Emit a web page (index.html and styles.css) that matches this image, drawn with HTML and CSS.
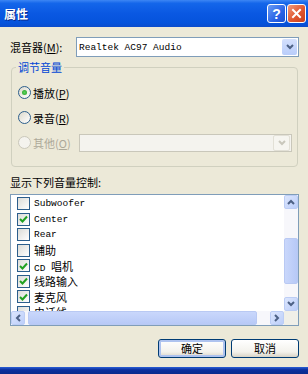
FILE: index.html
```html
<!DOCTYPE html>
<html lang="zh-CN">
<head>
  <meta charset="UTF-8" />
  <meta name="viewport" content="width=device-width, initial-scale=1.0"/>
  <title>属性</title>
  <link rel="stylesheet" href="styles.css">
</head>
<body>
  <div class="window">
    <div class="titlebar">
      <span class="title">属性</span>
      <div class="title-buttons">
        <button class="tb-btn help">?</button>
        <button class="tb-btn close">
          <svg width="11" height="11" viewBox="0 0 11 11"><path d="M2 2 L9 9 M9 2 L2 9" stroke="#fff" stroke-width="2" stroke-linecap="square" fill="none"/></svg>
        </button>
      </div>
    </div>

    <div class="content">
      <div class="mixer-row">
        <label class="mixer-label">混音器(<u>M</u>):</label>
        <div class="combo">
          <span class="mono">Realtek AC97 Audio</span>
          <span class="drop">
            <svg width="8" height="6" viewBox="0 0 8 6"><path d="M1 1 L4 4 L7 1" stroke="#4d6185" stroke-width="2" fill="none"/></svg>
          </span>
        </div>
      </div>

      <fieldset class="group">
        <legend>调节音量</legend>
        <div class="radio-row">
          <span class="radio checked"></span>
          <span>播放(<u>P</u>)</span>
        </div>
        <div class="radio-row">
          <span class="radio"></span>
          <span>录音(<u>R</u>)</span>
        </div>
        <div class="radio-row disabled">
          <span class="radio"></span>
          <span class="other-label">其他(<u>O</u>)</span>
          <div class="combo combo-disabled">
            <span class="drop">
              <svg width="8" height="6" viewBox="0 0 8 6"><path d="M1 1 L4 4 L7 1" stroke="#c9c7bc" stroke-width="2" fill="none"/></svg>
            </span>
          </div>
        </div>
      </fieldset>

      <div class="list-label">显示下列音量控制:</div>
      <div class="listbox">
        <div class="items">
          <div class="item"><span class="check"></span><span class="mono">Subwoofer</span></div>
          <div class="item"><span class="check on"><svg width="9" height="8" viewBox="0 0 9 8"><path d="M1 4 L3.5 6.5 L8 1.5" stroke="#21a121" stroke-width="2" fill="none"/></svg></span><span class="mono">Center</span></div>
          <div class="item"><span class="check"></span><span class="mono">Rear</span></div>
          <div class="item"><span class="check"></span><span>辅助</span></div>
          <div class="item"><span class="check on"><svg width="9" height="8" viewBox="0 0 9 8"><path d="M1 4 L3.5 6.5 L8 1.5" stroke="#21a121" stroke-width="2" fill="none"/></svg></span><span><span class="mono">CD </span>唱机</span></div>
          <div class="item"><span class="check on"><svg width="9" height="8" viewBox="0 0 9 8"><path d="M1 4 L3.5 6.5 L8 1.5" stroke="#21a121" stroke-width="2" fill="none"/></svg></span><span>线路输入</span></div>
          <div class="item"><span class="check on"><svg width="9" height="8" viewBox="0 0 9 8"><path d="M1 4 L3.5 6.5 L8 1.5" stroke="#21a121" stroke-width="2" fill="none"/></svg></span><span>麦克风</span></div>
          <div class="item"><span class="check"></span><span>电话线</span></div>
        </div>

        <div class="vscroll">
          <span class="sb-btn"><svg width="8" height="6" viewBox="0 0 8 6"><path d="M1 5 L4 2 L7 5" stroke="#4d6185" stroke-width="2" fill="none"/></svg></span>
          <span class="v-gap"></span>
          <span class="thumb v-thumb"></span>
          <span class="track"></span>
          <span class="sb-btn"><svg width="8" height="6" viewBox="0 0 8 6"><path d="M1 1 L4 4 L7 1" stroke="#4d6185" stroke-width="2" fill="none"/></svg></span>
        </div>

        <div class="hscroll">
          <span class="sb-btn"><svg width="6" height="8" viewBox="0 0 6 8"><path d="M5 1 L2 4 L5 7" stroke="#4d6185" stroke-width="2" fill="none"/></svg></span>
          <span class="h-gap"></span>
          <span class="thumb h-thumb"></span>
          <span class="track"></span>
          <span class="sb-btn"><svg width="6" height="8" viewBox="0 0 6 8"><path d="M1 1 L4 4 L1 7" stroke="#4d6185" stroke-width="2" fill="none"/></svg></span>
        </div>
        <div class="corner"></div>
      </div>

      <div class="buttons">
        <button class="btn default">确定</button>
        <button class="btn">取消</button>
      </div>
    </div>

    <div class="frame-bottom"></div>
  </div>
</body>
</html>
```

FILE: styles.css
```css
body {
  margin: 0;
  padding: 0;
  background-color: #ece9d8;
  font-family: "Noto Sans CJK SC", sans-serif;
  font-size: 11px;
  color: #000;
}

.window {
  width: 308px;
  height: 374px;
  display: flex;
  flex-direction: column;
  overflow: hidden;
}

.titlebar {
  height: 27px;
  flex: none;
  display: flex;
  justify-content: space-between;
  align-items: center;
  padding: 0 2px 0 4px;
  background: linear-gradient(#3d86f4 0%, #1466ea 12%, #0a58e2 50%, #0553dc 85%, #0b4ccc 100%);
}

.title {
  color: #fff;
  font-weight: bold;
  font-size: 12px;
  text-shadow: 1px 1px #0a2a8c;
}

.title-buttons {
  display: flex;
  gap: 1px;
  align-self: flex-start;
  margin-top: 4px;
}

.tb-btn {
  width: 19px;
  height: 19px;
  padding: 0;
  border: 1px solid #fff;
  border-radius: 3px;
  display: flex;
  align-items: center;
  justify-content: center;
}

.help {
  background: linear-gradient(135deg, #6b9cf5, #2a64e6 60%, #1c50d2);
  color: #fff;
  font-family: "Liberation Sans", sans-serif;
  font-weight: bold;
  font-size: 14px;
  line-height: 1;
}

.close {
  background: linear-gradient(135deg, #f09b7c, #e0562f 55%, #c9401d);
}

.content {
  flex: 1;
  display: flex;
  flex-direction: column;
  padding: 10px 9px 0 10px;
}

.mono {
  font-family: "Liberation Mono", monospace;
  font-size: 9.5px;
}

.mixer-row {
  display: flex;
  align-items: center;
  height: 20px;
}

.mixer-label {
  width: 66px;
  flex: none;
}

.combo {
  flex: 1;
  height: 20px;
  box-sizing: border-box;
  border: 1px solid #7f9db9;
  background-color: #fff;
  display: flex;
  align-items: center;
  padding-left: 2px;
}

.drop {
  margin-left: auto;
  margin-right: 1px;
  width: 15px;
  height: 16px;
  border-radius: 2px;
  background: linear-gradient(#d4e0fd, #b9cdfa);
  display: flex;
  align-items: center;
  justify-content: center;
}

.group {
  margin: 3px 1px 0;
  padding: 0 5px 11px 6px;
  border: 1px solid #d0d0bf;
  border-radius: 4px;
  min-width: 0;
}

.group legend {
  color: #0046d5;
  line-height: 14px;
  padding: 0 2px;
  margin-left: -2px;
}

.radio-row {
  display: flex;
  align-items: center;
  gap: 2px;
  height: 25px;
}

.radio-row:first-of-type {
  margin-top: 6px;
}

.radio {
  width: 13px;
  height: 13px;
  box-sizing: border-box;
  border: 1px solid #2c5e8c;
  border-radius: 50%;
  background: linear-gradient(135deg, #dcd9cc, #fff);
  display: flex;
  align-items: center;
  justify-content: center;
  flex: none;
}

.radio.checked::after {
  content: "";
  width: 5px;
  height: 5px;
  border-radius: 50%;
  background: radial-gradient(#5ed15e, #21a121);
}

.disabled {
  color: #aca899;
}

.disabled .radio {
  border-color: #cac8bb;
  background: #f4f3ee;
}

.other-label {
  width: 44px;
  flex: none;
}

.combo-disabled {
  height: 18px;
  border-color: #c9c7ba;
  background-color: #f4f3ee;
}

.combo-disabled .drop {
  height: 14px;
  background: #f6f5f0;
  border: 1px solid #e2e0d6;
}

.list-label {
  margin-top: 8px;
  line-height: 14px;
}

.listbox {
  margin-top: 5px;
  height: 132px;
  box-sizing: border-box;
  border: 1px solid #7f9db9;
  background-color: #fff;
  display: grid;
  grid-template-columns: 1fr 14px;
  grid-template-rows: 1fr 14px;
  overflow: hidden;
}

.items {
  padding-top: 1px;
  overflow: hidden;
  min-height: 0;
}

.item {
  height: 15.5px;
  display: flex;
  align-items: center;
  gap: 4px;
  padding-left: 6px;
}

.check {
  width: 13px;
  height: 13px;
  box-sizing: border-box;
  border: 1px solid #2c5e8c;
  background: linear-gradient(135deg, #dcdcd7, #fff);
  display: flex;
  align-items: center;
  justify-content: center;
  flex: none;
}

.vscroll {
  display: flex;
  flex-direction: column;
  background-color: #f7f7fb;
}

.hscroll {
  display: flex;
  background-color: #f7f7fb;
}

.sb-btn {
  width: 14px;
  height: 14px;
  flex: none;
  box-sizing: border-box;
  border: 1px solid #bccdf5;
  border-radius: 2px;
  background: linear-gradient(135deg, #dce6fd, #bccefa);
  display: flex;
  align-items: center;
  justify-content: center;
}

.v-gap {
  height: 29px;
  flex: none;
}

.h-gap {
  width: 3px;
  flex: none;
}

.thumb {
  flex: none;
  box-sizing: border-box;
  border: 1px solid #b9c9f3;
  border-radius: 2px;
  background: linear-gradient(90deg, #c9d7fb, #b7c9f7);
}

.v-thumb {
  height: 46px;
}

.h-thumb {
  width: 229px;
  background: linear-gradient(#c9d7fb, #b7c9f7);
}

.track {
  flex: 1;
}

.corner {
  background-color: #f0efe8;
}

.buttons {
  display: flex;
  justify-content: flex-end;
  gap: 5px;
  margin-top: 13px;
}

.btn {
  width: 68px;
  height: 19px;
  padding: 0;
  border: 1px solid #003c74;
  border-radius: 3px;
  background: linear-gradient(#fff, #f3f2ec 70%, #d8d3c6);
  font-family: "Noto Sans CJK SC", sans-serif;
  font-size: 11px;
  line-height: 1;
  color: #000;
}

.btn.default {
  box-shadow: inset 0 0 0 2px #aec3ef;
}

.frame-bottom {
  height: 7px;
  flex: none;
  background: linear-gradient(#2a5fd6, #0c2f9e 40%, #0a2a8c);
}
```
